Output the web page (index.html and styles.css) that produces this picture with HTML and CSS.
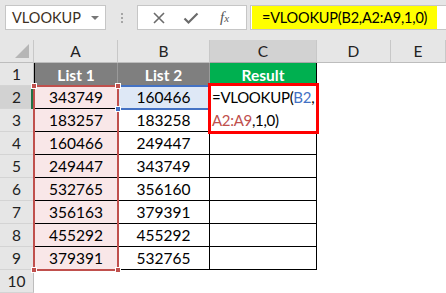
FILE: index.html
```html
<!DOCTYPE html>
<html lang="en">
<head>
  <title>VLOOKUP</title>
  <link rel="stylesheet" href="styles.css">
</head>
<body>
  <div class="toolbar">
    <div class="namebox">
      <span>VLOOKUP</span>
      <span class="caret"></span>
    </div>
    <div class="dots"><i></i><i></i><i></i></div>
    <div class="buttons">
      <svg width="14" height="14" viewBox="0 0 14 14"><path d="M2 2 L12 12 M12 2 L2 12" stroke="#6b6b6b" stroke-width="1.6"/></svg>
      <svg width="16" height="14" viewBox="0 0 16 14"><path d="M1.5 7.5 L5.5 11.5 L14.5 2.5" fill="none" stroke="#6b6b6b" stroke-width="2.2"/></svg>
      <span class="fx">f<sub>x</sub></span>
    </div>
    <div class="formula">
      <span class="hl">=VLOOKUP(B2,A2:A9,1,0)</span>
    </div>
  </div>

  <div class="sheet">
    <!-- column headers -->
    <div class="corner"><span class="tri"></span></div>
    <div class="hd">A</div>
    <div class="hd">B</div>
    <div class="hd sel">C</div>
    <div class="hd">D</div>
    <div class="hd">E</div>

    <div class="rh">1</div>
    <div class="t first th">List 1</div>
    <div class="t th">List 2</div>
    <div class="t th green">Result</div>
    <div></div><div></div>

    <div class="rh sel">2</div>
    <div class="t first ra">343749</div>
    <div class="t rb">160466</div>
    <div class="t"></div>
    <div></div><div></div>

    <div class="rh">3</div>
    <div class="t first ra">183257</div>
    <div class="t">183258</div>
    <div class="t"></div>
    <div></div><div></div>

    <div class="rh">4</div>
    <div class="t first ra">160466</div>
    <div class="t">249447</div>
    <div class="t"></div>
    <div></div><div></div>

    <div class="rh">5</div>
    <div class="t first ra">249447</div>
    <div class="t">343749</div>
    <div class="t"></div>
    <div></div><div></div>

    <div class="rh">6</div>
    <div class="t first ra">532765</div>
    <div class="t">356160</div>
    <div class="t"></div>
    <div></div><div></div>

    <div class="rh">7</div>
    <div class="t first ra">356163</div>
    <div class="t">379391</div>
    <div class="t"></div>
    <div></div><div></div>

    <div class="rh">8</div>
    <div class="t first ra">455292</div>
    <div class="t">455292</div>
    <div class="t"></div>
    <div></div><div></div>

    <div class="rh">9</div>
    <div class="t first ra">379391</div>
    <div class="t">532765</div>
    <div class="t"></div>
    <div></div><div></div>

    <div class="rh">10</div>
    <div></div><div></div><div></div><div></div><div></div>

    <!-- overlays: reference ranges and edit cell -->
    <div class="active-row"></div>
    <div class="range-a"></div>
    <div class="range-b"></div>
    <span class="handle red h1"></span>
    <span class="handle red h2"></span>
    <span class="handle red h3"></span>
    <span class="handle red h4"></span>
    <span class="handle blue h5"></span>
    <div class="editor">=VLOOKUP(<span class="ref-b">B2</span>,<br><span class="ref-a">A2:A9</span>,1,0)</div>
  </div>
</body>
</html>
```

FILE: styles.css
```css
body {
  margin: 0;
  font-family: Lato, "Open Sans", sans-serif;
  font-size: 15.5px;
  color: #000;
  background-color: #fff;
  width: 446px;
  height: 293px;
  overflow: hidden;
}

.toolbar {
  height: 40px;
  background-color: #e6e6e6;
  display: flex;
  align-items: flex-start;
  padding-top: 5px;
  box-sizing: border-box;
}

.namebox {
  margin-left: 5px;
  width: 101px;
  height: 25px;
  box-sizing: border-box;
  background-color: #fff;
  border: 1px solid #c6c6c6;
  display: flex;
  align-items: center;
  justify-content: space-between;
  padding: 0 6px 0 6px;
  font-size: 14.5px;
  color: #3b2f22;
}

.caret {
  width: 0;
  height: 0;
  border-left: 4px solid transparent;
  border-right: 4px solid transparent;
  border-top: 4px solid #777;
  margin-top: 1px;
}

.dots {
  width: 31px;
  height: 25px;
  display: flex;
  flex-direction: column;
  align-items: center;
  justify-content: center;
  gap: 2px;
}

.dots i {
  width: 2px;
  height: 2px;
  background-color: #a6a6a6;
}

.buttons {
  width: 110px;
  height: 25px;
  box-sizing: border-box;
  background-color: #fff;
  border: 1px solid #c6c6c6;
  display: flex;
  align-items: center;
  padding-left: 14px;
  gap: 17px;
}

.fx {
  font-family: "Liberation Serif", serif;
  font-style: italic;
  font-size: 15px;
  color: #555;
  margin-left: 4px;
}

.fx sub {
  font-size: 11px;
  vertical-align: 0;
}

.formula {
  margin-left: 3px;
  flex: 1;
  height: 25px;
  box-sizing: border-box;
  background-color: #fff;
  border: 1px solid #c6c6c6;
  border-right: none;
  padding-left: 1px;
}

.hl {
  display: inline-block;
  height: 23px;
  line-height: 23px;
  background-color: #ffff00;
  padding: 0 10px 0 10px;
  font-size: 14.5px;
  letter-spacing: -0.2px;
}

.sheet {
  position: relative;
  display: grid;
  grid-template-columns: 34px 84px 92px 107px 74px 55px;
  grid-auto-rows: 23px;
}

.sheet > div {
  box-sizing: border-box;
  display: flex;
  align-items: center;
  justify-content: center;
}

.corner {
  background-color: #e6e6e6;
  border-right: 1px solid #c8c8c8;
  border-bottom: 1px solid #bdbdbd;
  position: relative;
}

.tri {
  position: absolute;
  right: 4px;
  bottom: 4px;
  width: 0;
  height: 0;
  border-left: 14px solid transparent;
  border-bottom: 14px solid #b6b6b6;
}

.hd {
  background-color: #e6e6e6;
  border-right: 1px solid #c8c8c8;
  border-bottom: 1px solid #bdbdbd;
  color: #222;
}

.hd.sel {
  background-color: #d2d2d2;
  border-bottom-color: #a8a8a8;
}

.rh {
  background-color: #e6e6e6;
  border-right: 1px solid #bdbdbd;
  border-bottom: 1px solid #d4d4d4;
  color: #222;
}

.rh.sel {
  background-color: #d2d2d2;
}

.t {
  border-right: 1px solid #000;
  border-bottom: 1px solid #000;
}

.t.first {
  border-left: 1px solid #000;
}

.th {
  background-color: #7f7f7f;
  color: #fff;
  font-weight: bold;
  border-right-color: #9a9a9a;
  border-bottom: none;
}

.th.green {
  background-color: #00b050;
  border-right-color: #000;
}

.ra {
  background-color: #f9e7e8;
}

.rb {
  background-color: #dee8f6;
}

.active-row {
  position: absolute;
  left: 31px;
  top: 46px;
  width: 3px;
  height: 23px;
  background-color: #217346;
}

.range-a {
  position: absolute;
  left: 33px;
  top: 45px;
  width: 86px;
  height: 186px;
  box-sizing: border-box;
  border: 2px solid #c0504d;
}

.range-b {
  position: absolute;
  left: 118px;
  top: 45px;
  width: 92px;
  height: 25px;
  box-sizing: border-box;
  border-top: 2px solid #4472c4;
  border-bottom: 2px solid #4472c4;
}

.handle {
  position: absolute;
  width: 6px;
  height: 6px;
  box-sizing: border-box;
  border: 1px solid #fff;
}

.handle.red {
  background-color: #c0504d;
}

.handle.blue {
  background-color: #4472c4;
}

.h1 { left: 31px; top: 43px; }
.h2 { left: 115px; top: 43px; }
.h3 { left: 31px; top: 227px; }
.h4 { left: 115px; top: 227px; }
.h5 { left: 115px; top: 66px; }

.editor {
  position: absolute;
  left: 208px;
  top: 43px;
  width: 111px;
  height: 51px;
  box-sizing: border-box;
  border: 3px solid #ff0000;
  background-color: #fff;
  padding-left: 1px;
  line-height: 23px;
  font-size: 15px;
  letter-spacing: -0.3px;
  white-space: nowrap;
  display: block !important;
}

.ref-b {
  color: #4472c4;
}

.ref-a {
  color: #c0504d;
}
```
